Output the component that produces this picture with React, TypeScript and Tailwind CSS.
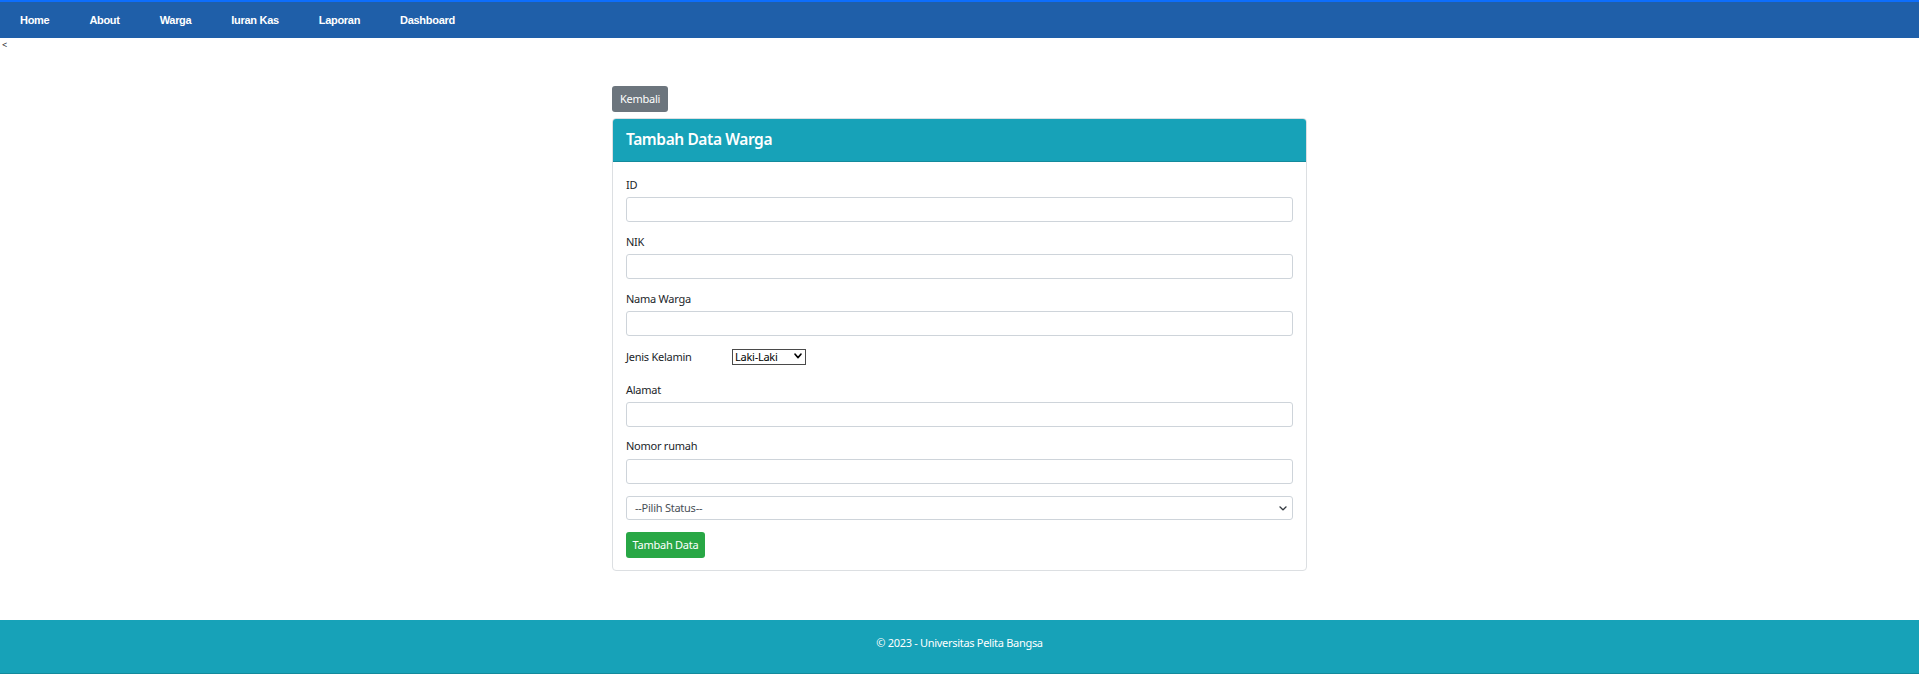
import type { ReactNode } from 'react'

const links = ['Home', 'About', 'Warga', 'Iuran Kas', 'Laporan', 'Dashboard']

function Chevron({ className }: { className?: string }) {
  return (
    <svg viewBox="0 0 16 11" className={className} fill="none" preserveAspectRatio="none">
      <path d="M2 2l6 6.5L14 2" stroke="currentColor" strokeWidth="3" strokeLinecap="round" strokeLinejoin="round" />
    </svg>
  )
}

function Field({ label, gap = 'mt-[11px]', inputGap = 'mt-[3px]', children }: { label: string; gap?: string; inputGap?: string; children?: ReactNode }) {
  return (
    <div className={gap}>
      <label className="block h-[18px] leading-[18px] text-[11px] tracking-[-0.25px] text-[#212529]">{label}</label>
      {children ?? (
        <input className={`${inputGap} block w-full h-[25px] border border-[#ced4da] rounded-[3px] bg-white outline-none`} />
      )}
    </div>
  )
}

export default function App() {
  return (
    <div className="min-h-[676px] flex flex-col bg-white font-['Noto_Sans',sans-serif] text-[#212529]">
      <nav className="h-[38px] shrink-0 bg-[#1f5fa9] border-t-2 border-[#0d6efd] flex items-center">
        {links.map(l => (
          <a key={l} href="#" className="px-5 text-white font-bold text-[11px] tracking-[-0.3px] font-['Liberation_Sans',Arial,sans-serif]">
            {l}
          </a>
        ))}
      </nav>
      <div className="h-[14px] pl-[2px] text-[9px] leading-[14px]">&lt;</div>

      <main className="w-[695px] mx-auto mt-[34px] mb-[49px]">
        <button className="block h-[26px] w-[56px] rounded-[3px] bg-[#6c757d] text-white text-[11px] tracking-[-0.25px]">Kembali</button>

        <div className="mt-[6px] border border-[#dcdfe2] rounded-[4px] overflow-hidden">
          <div className="h-[43px] bg-[#17a2b8] border-b border-[#138a9c] flex items-center px-[13px]">
            <h5 className="text-white text-[15.5px] font-semibold tracking-[-0.4px]">Tambah Data Warga</h5>
          </div>

          <form className="px-[13px] pt-[14px] pb-[12px]">
            <Field label="ID" gap="" />
            <Field label="NIK" />
            <Field label="Nama Warga" />

            <div className="mt-[12px] h-[18px] flex items-center">
              <span className="w-[106px] text-[11px] tracking-[-0.25px]">Jenis Kelamin</span>
              <div className="relative w-[74px] h-[16px] border border-[#4a4a4a] bg-white">
                <span className="absolute left-[2px] top-0 leading-[14px] text-[11px] tracking-[-0.25px] text-black">Laki-Laki</span>
                <Chevron className="absolute right-[3px] top-[3px] w-[8px] h-[6px] text-black" />
              </div>
            </div>

            <Field label="Alamat" gap="mt-[15px]" />
            <Field label="Nomor rumah" gap="mt-[10px]" inputGap="mt-[4px]" />

            <div className="relative mt-[12px] h-[24px] border border-[#ced4da] rounded-[3px] flex items-center pl-[8px]">
              <span className="text-[11px] tracking-[-0.25px] text-[#495057]">--Pilih Status--</span>
              <Chevron className="absolute right-[5px] top-[9px] w-[8px] h-[5px] text-[#343a40]" />
            </div>

            <button type="button" className="block mt-[12px] h-[26px] w-[79px] rounded-[3px] bg-[#28a745] text-white text-[11px] tracking-[-0.25px]">
              Tambah Data
            </button>
          </form>
        </div>
      </main>

      <footer className="h-[54px] shrink-0 bg-[#17a2b8] border-b border-[#138a9c] flex justify-center pt-[14px]">
        <p className="h-[18px] leading-[18px] text-white text-[11px] tracking-[-0.3px]">© 2023 - Universitas Pelita Bangsa</p>
      </footer>
    </div>
  )
}
